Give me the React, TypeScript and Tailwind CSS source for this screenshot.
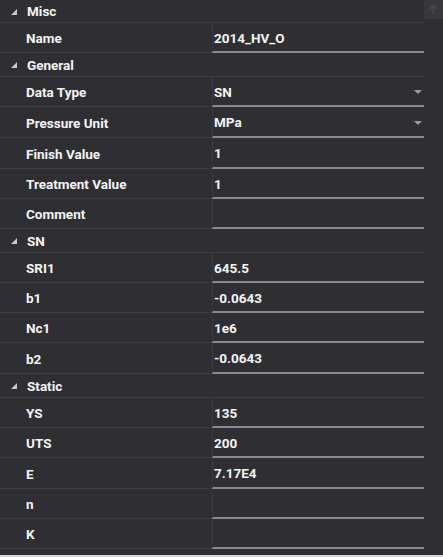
import React from 'react';

type Prop = { label: string; value?: string; dropdown?: boolean; h?: number };
type Section = { title: string; props: Prop[] };

const sections: Section[] = [
  { title: 'Misc', props: [{ label: 'Name', value: '2014_HV_O' }] },
  {
    title: 'General',
    props: [
      { label: 'Data Type', value: 'SN', dropdown: true },
      { label: 'Pressure Unit', value: 'MPa', dropdown: true, h: 31 },
      { label: 'Finish Value', value: '1', h: 31 },
      { label: 'Treatment Value', value: '1' },
      { label: 'Comment', value: '' },
    ],
  },
  {
    title: 'SN',
    props: [
      { label: 'SRI1', value: '645.5' },
      { label: 'b1', value: '-0.0643' },
      { label: 'Nc1', value: '1e6' },
      { label: 'b2', value: '-0.0643', h: 31 },
    ],
  },
  {
    title: 'Static',
    props: [
      { label: 'YS', value: '135' },
      { label: 'UTS', value: '200' },
      { label: 'E', value: '7.17E4', h: 31 },
      { label: 'n', value: '' },
      { label: 'K', value: '' },
    ],
  },
];

const Expander = () => (
  <svg width="6" height="6" viewBox="0 0 6 6" className="shrink-0">
    <polygon points="6,0 6,6 0,6" fill="#c9c9c9" />
  </svg>
);

const Row: React.FC<{ prop: Prop }> = ({ prop }) => (
  <div
    className={`flex ${prop.h === 31 ? 'h-[31px]' : 'h-[30px]'}`}
  >
    <div className="w-[212px] flex items-center pl-[26px] pt-[2px] border-b border-[#3d3d42]">
      {prop.label}
    </div>
    <div className="flex-1 flex items-center justify-between border-l border-[#3a3a3f] border-b-2 border-b-[#8a8a8c] pl-[1px] pr-[2px] pt-[2px]">
      <span>{prop.value}</span>
      {prop.dropdown && (
        <svg width="8" height="4" viewBox="0 0 8 4">
          <polygon points="0,0 8,0 4,4" fill="#9c9c9e" />
        </svg>
      )}
    </div>
  </div>
);

export default function App() {
  return (
    <div
      className="w-[443px] h-[557px] bg-[#2f2f33] text-[#f4f4f4] text-[13.5px] font-bold flex flex-col overflow-hidden"
      style={{ fontFamily: 'Roboto, "Liberation Sans", sans-serif' }}
    >
      <div className="flex flex-1 min-h-0">
        <div className="w-[424px] flex flex-col">
          {sections.map((s, i) => (
            <div key={s.title}>
              <div
                className={`flex items-center gap-[10px] pl-[11px] pt-[1px] border-b border-[#3d3d42] ${i === 0 ? 'h-[23px]' : 'h-[24px]'}`}
              >
                <Expander />
                <span>{s.title}</span>
              </div>
              {s.props.map((p) => (
                <Row key={p.label} prop={p} />
              ))}
            </div>
          ))}
        </div>
        <div className="w-[19px] flex flex-col">
          <div className="h-[19px] bg-[#38383c] flex items-center justify-center">
            <svg width="9" height="11" viewBox="0 0 9 11">
              <path d="M4.5 10V1.5M1 5l3.5-3.5L8 5" stroke="#4a4a4f" strokeWidth="1.5" fill="none" />
            </svg>
          </div>
        </div>
      </div>
      <div className="h-[2px] bg-[#d6d6d6]" />
    </div>
  );
}
